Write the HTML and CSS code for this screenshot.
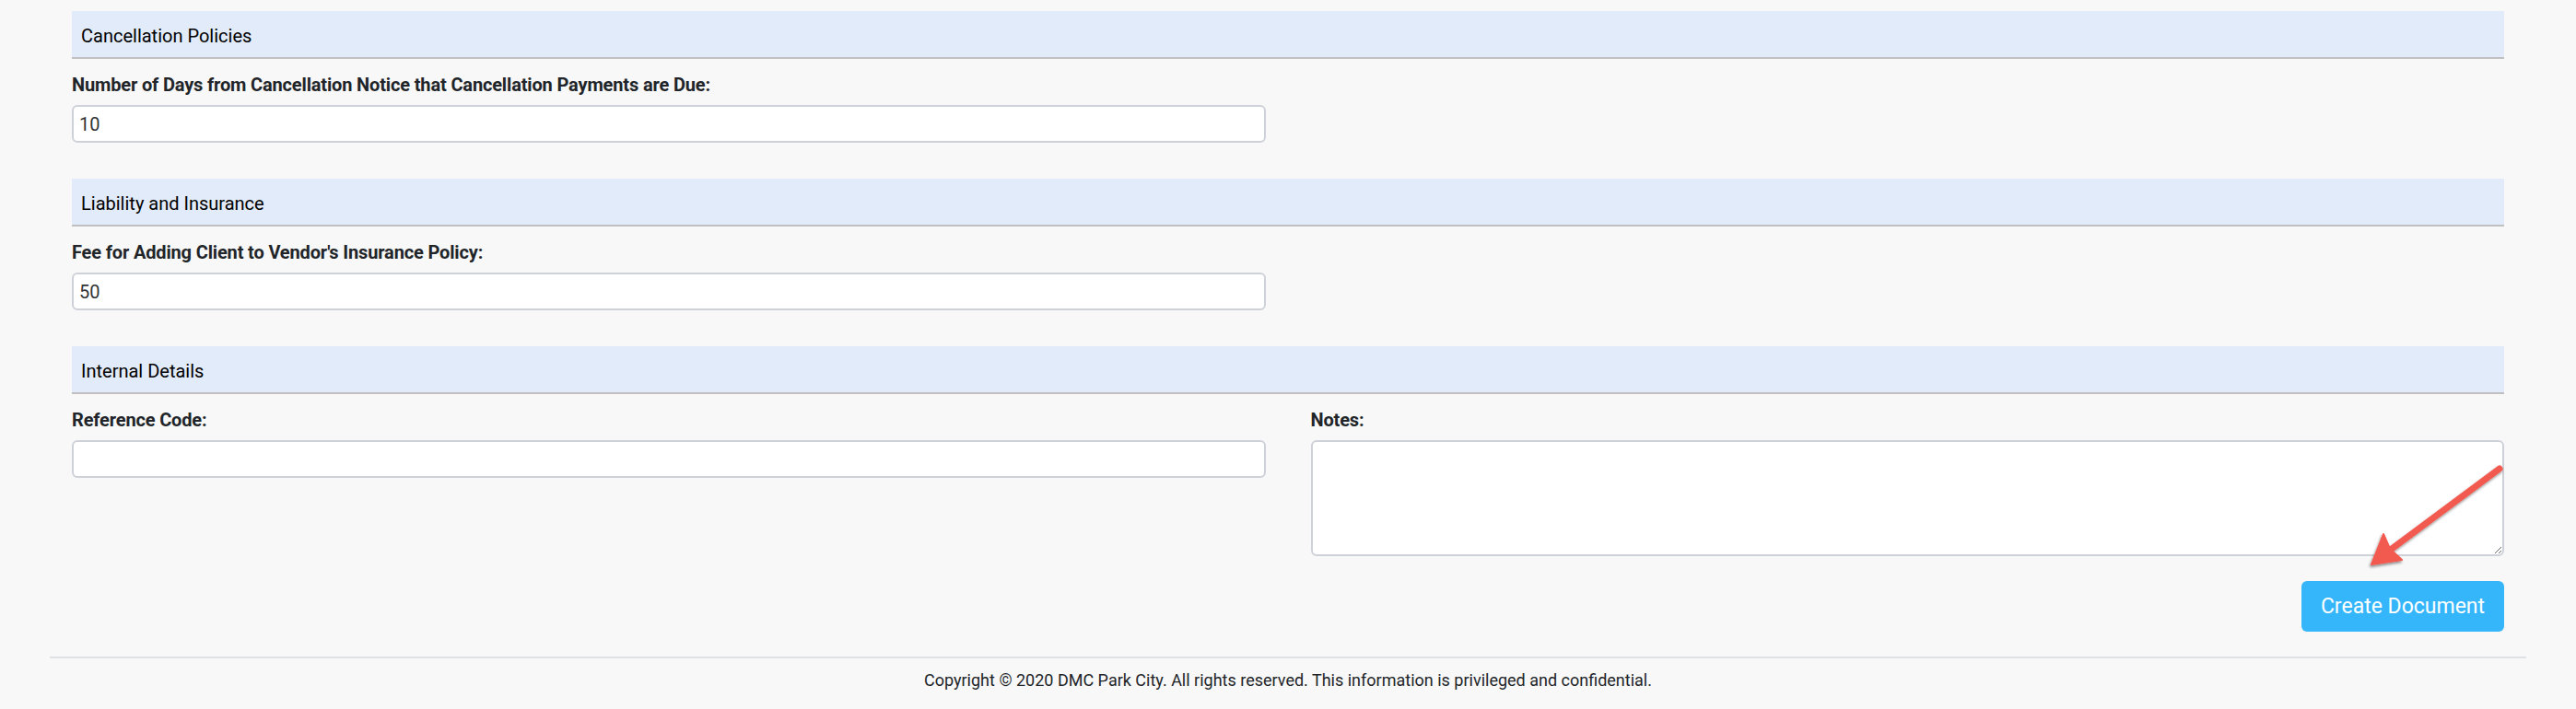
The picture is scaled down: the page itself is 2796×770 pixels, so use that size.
FILE: index.html
```html
<!DOCTYPE html>
<html lang="en">
<head>
<meta charset="utf-8">
<title>Create Document</title>
<link rel="stylesheet" href="styles.css">
</head>
<body>
<main class="page">
  <section class="section">
    <div class="section-head">Cancellation Policies</div>
    <div class="row">
      <div class="field">
        <label class="field-label" for="days">Number of Days from Cancellation Notice that Cancellation Payments are Due:</label>
        <input class="field-input" id="days" type="text" value="10">
      </div>
    </div>
  </section>
  <section class="section">
    <div class="section-head">Liability and Insurance</div>
    <div class="row">
      <div class="field">
        <label class="field-label" for="fee">Fee for Adding Client to Vendor's Insurance Policy:</label>
        <input class="field-input" id="fee" type="text" value="50">
      </div>
    </div>
  </section>
  <section class="section section-last">
    <div class="section-head">Internal Details</div>
    <div class="row">
      <div class="field">
        <label class="field-label" for="ref">Reference Code:</label>
        <input class="field-input" id="ref" type="text" value="">
      </div>
      <div class="field">
        <label class="field-label" for="notes">Notes:</label>
        <textarea class="field-input field-textarea" id="notes"></textarea>
      </div>
    </div>
  </section>
  <div class="actions">
    <button class="btn-primary" type="button">Create Document</button>
  </div>
</main>
<footer class="footer">
  <p class="footer-text">Copyright © 2020 DMC Park City. All rights reserved. This information is privileged and confidential.</p>
</footer>
<svg class="annotation-arrow" width="180" height="140" viewBox="2550 490 180 140" xmlns="http://www.w3.org/2000/svg">
  <defs>
    <filter id="arrowShadow" x="-20%" y="-20%" width="140%" height="140%">
      <feDropShadow dx="-1" dy="2" stdDeviation="1.6" flood-color="#000" flood-opacity="0.45"/>
    </filter>
  </defs>
  <g filter="url(#arrowShadow)" fill="#f25a4f" stroke="#f25a4f">
    <line x1="2713" y1="509" x2="2596" y2="596" stroke-width="7" stroke-linecap="round"/>
    <path d="M2574 613 L2587 580 L2594 596 L2607 608 Z" stroke-width="2" stroke-linejoin="round"/>
  </g>
</svg>
</body>
</html>
```

FILE: styles.css
```css
html, body {
  margin: 0;
  padding: 0;
  background: #f8f8f8;
}

body {
  position: relative;
  font-family: Roboto, "Liberation Sans", Arial, sans-serif;
  color: #212529;
  min-height: 770px;
}

.page {
  padding: 12px 78px 0 78px;
}

.section {
  margin-bottom: 39px;
}

.section-last {
  margin-bottom: 0;
}

.section-head {
  box-sizing: border-box;
  height: 52px;
  background: #e1ebf9;
  border-bottom: 2px solid #c0c0c2;
  padding: 4px 10px 0 10px;
  line-height: 46px;
  font-size: 20px;
  color: #000;
}

.row {
  display: grid;
  grid-template-columns: 1fr 1fr;
  column-gap: 49px;
}

.field {
  display: flex;
  flex-direction: column;
}

.field-label {
  margin-top: 13px;
  font-size: 20px;
  line-height: 30px;
  font-weight: 700;
  letter-spacing: -0.15px;
  color: #212529;
}

.field-input {
  margin-top: 7px;
  height: 41px;
  box-sizing: border-box;
  border: 2px solid #ced2d8;
  border-radius: 6px;
  background: #fff;
  padding: 0 6px;
  font-family: Roboto, "Liberation Sans", Arial, sans-serif;
  font-size: 20px;
  color: #333333;
  outline: none;
}

.field-textarea {
  height: 126px;
  resize: both;
  padding: 6px;
}

.actions {
  display: flex;
  justify-content: flex-end;
  margin-top: 27px;
}

.btn-primary {
  height: 55px;
  width: 220px;
  border: none;
  border-radius: 6px;
  background: #35b6fb;
  color: #fff;
  font-family: Roboto, "Liberation Sans", Arial, sans-serif;
  font-size: 23px;
  padding: 0;
  cursor: pointer;
}

.footer {
  margin: 27px 54px 0 54px;
  border-top: 2px solid #dee2e6;
  padding-top: 10px;
}

.footer-text {
  margin: 0;
  text-align: center;
  font-size: 18px;
  line-height: 27px;
  color: #212529;
}

.annotation-arrow {
  position: absolute;
  left: 2550px;
  top: 490px;
  overflow: visible;
}
```
